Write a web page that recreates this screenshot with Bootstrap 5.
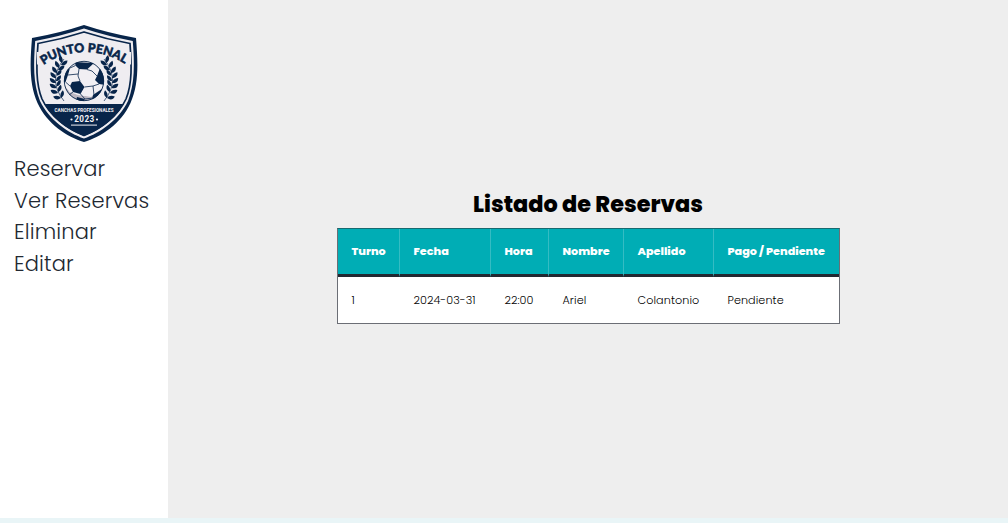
<!DOCTYPE html>
<html lang="es">
<head>
<meta charset="utf-8">
<meta name="viewport" content="width=device-width, initial-scale=1">
<title>Listado de Reservas</title>
<link href="https://cdn.jsdelivr.net/npm/bootstrap@5.3.0/dist/css/bootstrap.min.css" rel="stylesheet">
<style>
body{background:#e9f5f7;font-family:Poppins,Inter,sans-serif;color:#000}
.shell{height:518px}
.side{width:168px;padding:24px 14px 0}
.crest{width:108px;height:119px;margin-left:16px}
.menu{margin-top:10px}
.menu a{display:block;font-size:21px;font-weight:300;letter-spacing:.16px;line-height:31.6px;color:#222831;text-decoration:none;white-space:nowrap}
.main{background:#eee;padding-top:187px}
.title{font-size:22.4px;font-weight:800;line-height:34px;margin:0 0 7px;white-space:nowrap}
.booking{width:503px;table-layout:fixed;border-collapse:separate;border-spacing:0;background:#fff;border:1px solid #6b6e75;border-top-color:#176a70;font-size:11.2px;white-space:nowrap}
.booking th,.booking td{padding:0 0 0 14px}
.booking th{height:48px;background:#00adb5;color:#fff;font-weight:800;border-bottom:3px solid #222831}
.booking th+th{border-left:1px solid #35bcc3}
.booking td{height:46px;font-weight:300;letter-spacing:.08px;color:#000}
.booking td+td{padding-left:15px}
</style>
</head>
<body>
<div class="shell d-flex">
<aside class="side bg-white flex-shrink-0">
<svg class="crest d-block" viewBox="30 24 108 119" role="img" aria-label="Punto Penal">
<defs>
<path id="arc" d="M43.500 65A73.500 73.500 0 0 1 130 67.500"/>
<clipPath id="inner"><path d="M38.500 43L84 33L129.500 43C131 64 132 82 126 99C120 115 101 130 84 136C67 130 48 115 42 99C36 82 37 64 38.500 43Z"/></clipPath>
<clipPath id="disc"><circle cx="84" cy="81" r="20"/></clipPath>
<path id="leaf" d="M0 0C-4.200 0-6-2.600-5.400-5.800C-2.200-5.200 0-3 0 0Z"/>
<g id="laurel" fill="#08254a">
<path d="M64 59Q47 80 64 101" fill="none" stroke="#08254a" stroke-width=".7"/>
<use href="#leaf" transform="translate(62 63) rotate(30)"/><use href="#leaf" transform="translate(59 68) rotate(18)"/><use href="#leaf" transform="translate(57 73) rotate(8)"/><use href="#leaf" transform="translate(56 78)"/><use href="#leaf" transform="translate(56 83) rotate(-8)"/><use href="#leaf" transform="translate(56.500 88) rotate(-16)"/><use href="#leaf" transform="translate(58 93) rotate(-26)"/><use href="#leaf" transform="translate(61 98) rotate(-36)"/>
<use href="#leaf" transform="translate(61 65) scale(-1 1) rotate(-12)"/><use href="#leaf" transform="translate(58 70) scale(-1 1) rotate(-12)"/><use href="#leaf" transform="translate(56.500 75.500) scale(-.9 1)"/><use href="#leaf" transform="translate(56 81) scale(-.9 1)"/><use href="#leaf" transform="translate(56.500 86.500) scale(-.9 1) rotate(10)"/><use href="#leaf" transform="translate(58 92) scale(-.9 1) rotate(20)"/><use href="#leaf" transform="translate(61 98) scale(-.9 1) rotate(28)"/>
</g>
</defs>
<path fill="#08254a" d="M84 25Q108 33 136 38C138 63 139 84 130.500 103C121 124 101 137 84 142C67 137 47 124 37.500 103C29 84 30 63 32 38Q60 33 84 25Z"/>
<path fill="#efedf1" d="M84 28.600Q108 36.500 132.800 41C134.500 64 135 83 128 101C119 120 100 133 84 138.500C68 133 49 120 40 101C33 83 33.500 64 35.200 41Q60 36.500 84 28.600Z"/>
<path fill="#efedf1" stroke="#08254a" stroke-width="1.700" d="M84 32Q107 39.500 130 43.500C131.500 64 132.500 83 126 99C118 116 101 129 84 135.500C67 129 50 116 42 99C35.500 83 36.500 64 38 43.500Q61 39.500 84 32Z"/>
<path clip-path="url(#inner)" fill="#08254a" d="M35 104H133V137H35Z"/>
<path d="M36.800 52H42V64.500H37ZM126 52H131V64.500H126Z" fill="#efedf1"/>
<text font-family="Lato,sans-serif" font-weight="900" font-size="12.400" fill="#08254a" stroke="#08254a" stroke-width=".5"><textPath href="#arc" textLength="86" lengthAdjust="spacing">PUNTO PENAL</textPath></text>
<use href="#laurel"/><use href="#laurel" transform="matrix(-1 0 0 1 168 0)"/>
<g clip-path="url(#disc)">
<circle cx="84" cy="81" r="20" fill="#f1eff3"/>
<path fill="#bdb8c2" d="M63 84Q70 95 84 96Q97 95 104 86V102H63Z"/>
<path fill="#f1eff3" d="M65 83L70 85 72 91 70 93ZM84 87L92 86 95 94 91 97 80 95Z"/>
<path fill="#08254a" d="M75 62L84 62.500 94 63 87 69.500 79 69 75.500 65.500ZM63 76L66 70 70 68 68 75 65.500 82 63 83ZM72 82L80 81 84.500 87 80.500 94 73 92 70 86ZM97 76L100 68 105 74V85L99 84 95 80ZM93 95L102 89 99 98 92 100ZM77 97L85 99 83 102 76 101Z"/>
<path fill="none" stroke="#08254a" stroke-width=".8" d="M70 68L75.500 65.500M79 69L78 76 80 81M87 69.500L92 71 97 76M68 75L78 74M65.500 82L70 86M84.500 87L93 86 99 84M93 86L94 95M80.500 94L85 99 93 98M73 92L69 95"/>
</g>
<circle cx="84" cy="81" r="19.700" fill="none" stroke="#08254a" stroke-width=".9"/>
<g fill="#f4f2f5" text-anchor="middle" font-family="Roboto,sans-serif" font-weight="700">
<text x="84" y="111.800" font-size="5" textLength="59" lengthAdjust="spacingAndGlyphs">CANCHAS PROFESIONALES</text>
<text x="84.200" y="122.200" font-size="8.200" textLength="20" lengthAdjust="spacing">2023</text>
<circle cx="71.500" cy="119.500" r="1.100"/><circle cx="97" cy="119.500" r="1.100"/><path d="M71 124.600H97V125.600H71Z"/>
</g>
</svg>
<nav class="menu"><a href="#">Reservar</a><a href="#">Ver Reservas</a><a href="#">Eliminar</a><a href="#">Editar</a></nav>
</aside>
<main class="main flex-grow-1 d-flex flex-column align-items-center">
<h1 class="title">Listado de Reservas</h1>
<table class="booking">
<colgroup><col style="width:61px"><col style="width:91px"><col style="width:58px"><col style="width:75px"><col style="width:90px"><col></colgroup>
<thead><tr><th>Turno</th><th>Fecha</th><th>Hora</th><th>Nombre</th><th>Apellido</th><th>Pago / Pendiente</th></tr></thead>
<tbody><tr><td>1</td><td>2024-03-31</td><td>22:00</td><td>Ariel</td><td>Colantonio</td><td>Pendiente</td></tr></tbody>
</table>
</main>
</div>
</body>
</html>
